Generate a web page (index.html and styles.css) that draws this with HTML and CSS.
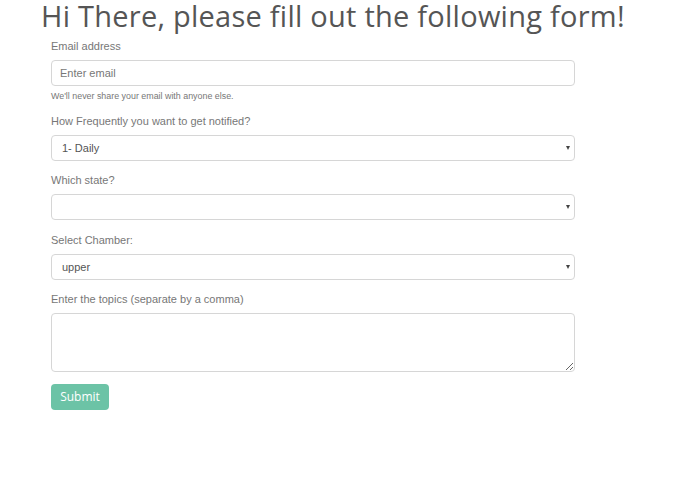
FILE: index.html
```html
<!DOCTYPE html>
<html>
<head>
<meta charset="utf-8">
<link rel="stylesheet" href="styles.css">
</head>
<body>
<h1 class="title">Hi There, please fill out the following form!</h1>
<form class="form">
  <div class="group">
    <label class="label">Email address</label>
    <input class="control" type="email" placeholder="Enter email">
    <small class="help">We'll never share your email with anyone else.</small>
  </div>
  <div class="group">
    <label class="label">How Frequently you want to get notified?</label>
    <div class="select-wrap">
      <select class="control select"><option>1- Daily</option></select>
    </div>
  </div>
  <div class="group">
    <label class="label">Which state?</label>
    <div class="select-wrap">
      <select class="control select"><option></option></select>
    </div>
  </div>
  <div class="group">
    <label class="label">Select Chamber:</label>
    <div class="select-wrap">
      <select class="control select"><option>upper</option></select>
    </div>
  </div>
  <div class="group">
    <label class="label">Enter the topics (separate by a comma)</label>
    <textarea class="control textarea"></textarea>
  </div>
  <button class="btn" type="button">Submit</button>
</form>
</body>
</html>
```
FILE: styles.css
```css
html, body {
  margin: 0;
  padding: 0;
  background: #fff;
}
body {
  font-family: "Liberation Sans", Arial, sans-serif;
  color: #555;
}
.title {
  margin: 0;
  padding: 1px 0 0 41px;
  font-family: "Open Sans", sans-serif;
  font-weight: 400;
  font-size: 29px;
  line-height: 30px;
  color: #555;
  white-space: nowrap;
  letter-spacing: 0.25px;
}
.form {
  margin: 8px 0 0 51px;
  width: 524px;
}
.group {
  margin-bottom: 12.6px;
}
.label {
  display: block;
  font-size: 11px;
  line-height: 14px;
  color: #777;
  margin-bottom: 7px;
}
.control {
  display: block;
  box-sizing: border-box;
  width: 100%;
  height: 26px;
  border: 1px solid #d6d6d6;
  border-radius: 4px;
  background: #fff;
  padding: 0 8px;
  font-family: "Liberation Sans", Arial, sans-serif;
  font-size: 11px;
  color: #555;
  outline: none;
}
.control::placeholder {
  color: #777;
}
.help {
  display: block;
  font-size: 8.9px;
  line-height: 11px;
  color: #777;
  margin-top: 5px;
  margin-bottom: -1px;
}
.select-wrap {
  position: relative;
}
.select {
  -webkit-appearance: none;
  appearance: none;
  padding-left: 10px;
}
.select-wrap::after {
  content: "";
  position: absolute;
  right: 5px;
  top: 11px;
  border-left: 2.5px solid transparent;
  border-right: 2.5px solid transparent;
  border-top: 4px solid #444;
  pointer-events: none;
}
.textarea {
  height: 59px;
  resize: vertical;
  padding: 6px 8px;
}
.btn {
  display: block;
  margin-top: -1px;
  box-sizing: border-box;
  width: 58px;
  height: 26px;
  border: none;
  border-radius: 4px;
  background: #6cc3a6;
  color: #fff;
  font-family: "Open Sans", sans-serif;
  font-size: 12px;
  padding: 0;
  cursor: pointer;
}
```
